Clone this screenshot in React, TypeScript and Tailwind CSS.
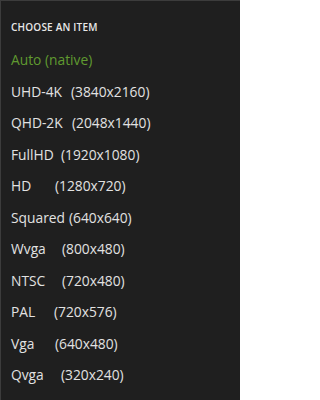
import React from 'react'

// name column widths keep the "(WxH)" part where it sits in the original list
const items = [
  { name: 'Auto (native)', res: '', nameW: '' },
  { name: 'UHD-4K', res: '(3840x2160)', nameW: 'w-[60px]' },
  { name: 'QHD-2K', res: '(2048x1440)', nameW: 'w-[61px]' },
  { name: 'FullHD', res: '(1920x1080)', nameW: 'w-[50px]' },
  { name: 'HD', res: '(1280x720)', nameW: 'w-[44px]' },
  { name: 'Squared', res: '(640x640)', nameW: 'pr-[4px]' },
  { name: 'Wvga', res: '(800x480)', nameW: 'w-[51px]' },
  { name: 'NTSC', res: '(720x480)', nameW: 'w-[51px]' },
  { name: 'PAL', res: '(720x576)', nameW: 'w-[43px]' },
  { name: 'Vga', res: '(640x480)', nameW: 'w-[44px]' },
  { name: 'Qvga', res: '(320x240)', nameW: 'w-[50px]' },
]

export default function App() {
  const selected = 0

  return (
    <div
      className="w-[240px] h-[400px] overflow-hidden bg-[#1f1f1f] border-t border-l border-[#3c3c3c] text-[#e2e2e2]"
      style={{ fontFamily: '"Open Sans", "Noto Sans", sans-serif' }}
    >
      <div className="pl-[10px] pt-[19px]">
        <h2 className="text-[10px] font-semibold tracking-[0.2px] text-[#e8e8e8] leading-[14px]">
          CHOOSE AN ITEM
        </h2>
        <ul className="mt-[11px] flex flex-col">
          {items.map((item, i) => (
            <li
              key={item.name}
              className={`h-[31.5px] flex items-center whitespace-nowrap text-[13.8px] ${
                i === selected ? 'text-[#609a30]' : 'text-[#e2e2e2]'
              }`}
            >
              <span className={`shrink-0 ${item.nameW}`}>{item.name}</span>
              {item.res && <span>{item.res}</span>}
            </li>
          ))}
        </ul>
      </div>
    </div>
  )
}
